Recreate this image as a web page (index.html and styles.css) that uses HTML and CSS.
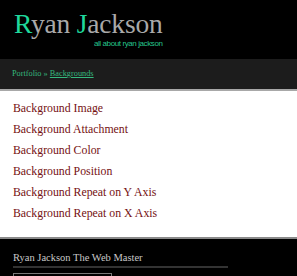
FILE: index.html
```html
<!DOCTYPE html>
<html lang="en">
<head>
  <meta charset="UTF-8">
  <title>Ryan Jackson - Backgrounds</title>
  <link rel="stylesheet" href="styles.css">
</head>
<body>
  <header class="masthead">
    <div class="brand">
      <h1 class="site-title"><span class="initial">R</span>yan <span class="initial">J</span>ackson</h1>
      <p class="tagline">all about ryan jackson</p>
    </div>
  </header>
  <nav class="crumbs">
    <a href="#">Portfolio</a> &raquo; <a href="#" class="current">Backgrounds</a>
  </nav>
  <main class="content">
    <ul class="topic-list">
      <li><a href="#">Background Image</a></li>
      <li><a href="#">Background Attachment</a></li>
      <li><a href="#">Background Color</a></li>
      <li><a href="#">Background Position</a></li>
      <li><a href="#">Background Repeat on Y Axis</a></li>
      <li><a href="#">Background Repeat on X Axis</a></li>
    </ul>
  </main>
  <footer class="site-footer">
    <h3 class="footer-title">Ryan Jackson The Web Master</h3>
    <div class="footer-box"></div>
  </footer>
</body>
</html>
```

FILE: styles.css
```css
* { box-sizing: border-box; }
body {
  margin: 0;
  background: #000;
  font-family: "Liberation Serif", Georgia, serif;
}
a { text-decoration: none; }

.masthead {
  background: #000;
  height: 59px;
  padding: 9px 0 0 14px;
}
.brand { display: inline-block; }
.site-title {
  margin: 0;
  font-weight: normal;
  font-size: 27.5px;
  line-height: 30px;
  color: #a9a9a9;
  letter-spacing: -0.2px;
}
.site-title .initial { color: #1fd89c; }
.tagline {
  margin: 0;
  text-align: right;
  font-family: "Liberation Sans", sans-serif;
  font-size: 8px;
  line-height: 10px;
  letter-spacing: -0.4px;
  color: #25c48c;
}

.crumbs {
  background: #1c1c1c;
  height: 32px;
  padding: 0 12px;
  line-height: 30px;
  border-bottom: 2px solid #a8a8a8;
  font-size: 8.3px;
  color: #35b97e;
}
.crumbs a { color: #35b97e; }
.crumbs a.current { text-decoration: underline; }

.content {
  background: #fff;
  padding: 7px 13px 13px;
}
.topic-list {
  list-style: none;
  margin: 0;
  padding: 0;
}
.topic-list li {
  font-size: 11.8px;
  line-height: 21px;
}
.topic-list a { color: #751012; }

.site-footer {
  background: #000;
  border-top: 2px solid #8a8a8a;
  padding: 12px 13px 0;
  height: 40px;
}
.footer-title {
  margin: 0;
  width: 215px;
  font-weight: normal;
  font-size: 10.5px;
  line-height: 14px;
  padding-bottom: 1px;
  color: #c8c8c8;
  border-bottom: 2px solid #333;
}
.footer-box {
  margin-top: 5px;
  width: 99px;
  height: 12px;
  border: 1px solid #777;
}
```
